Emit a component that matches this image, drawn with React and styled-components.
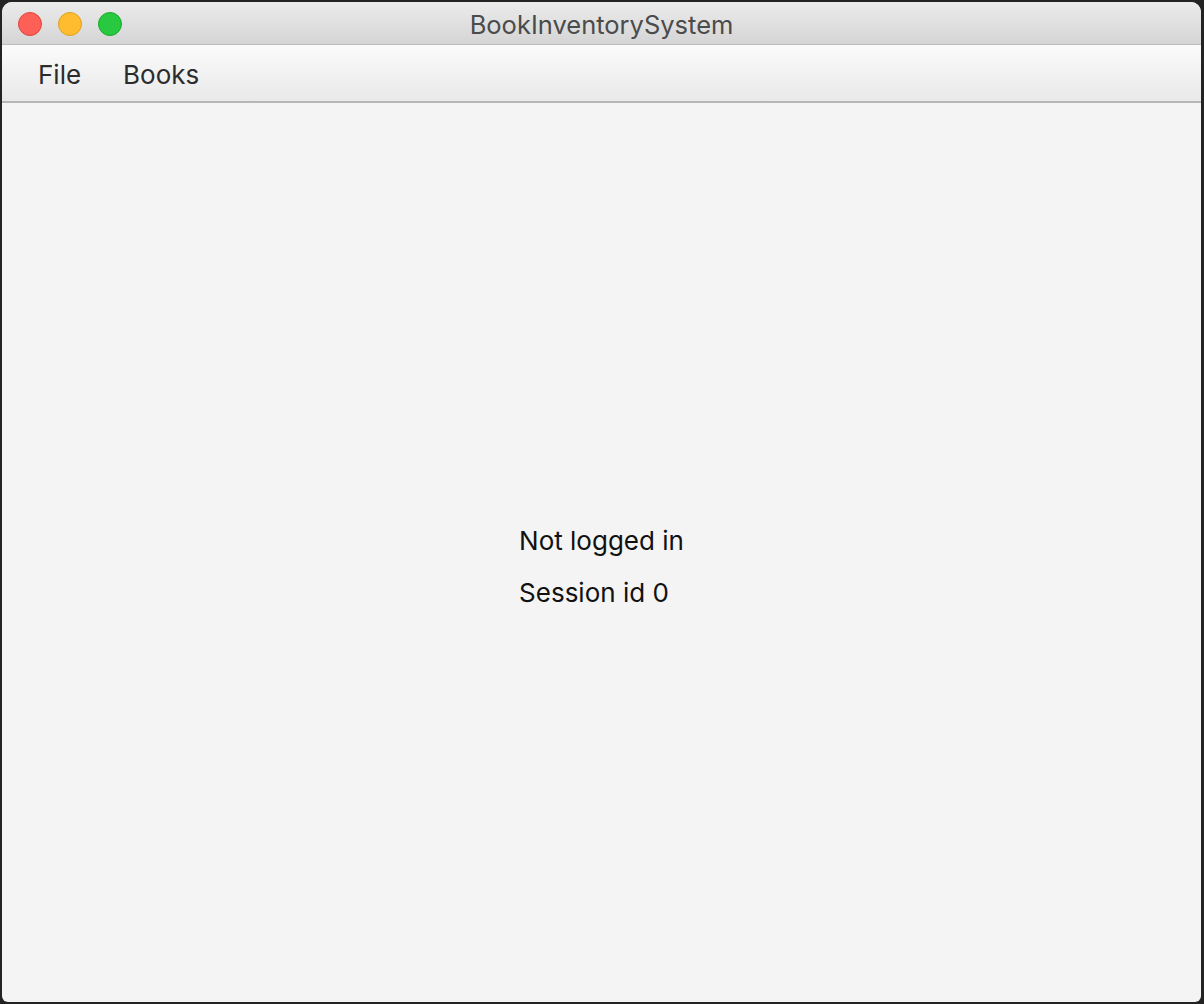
import React from "react";
import styled, { createGlobalStyle } from "styled-components";

const GlobalStyle = createGlobalStyle`
  html, body {
    margin: 0;
    padding: 0;
    background: #232323;
  }
  #root {
    height: 1004px;
  }
`;

const Desktop = styled.div`
  height: 1004px;
  box-sizing: border-box;
  padding: 2px 3px 2px 2px;
  display: flex;
`;

const Window = styled.div`
  flex: 1;
  display: flex;
  flex-direction: column;
  background: #f4f4f4;
  border-radius: 10px 10px 6px 6px;
  overflow: hidden;
  font-family: Inter, "Liberation Sans", sans-serif;
`;

const TitleBar = styled.div`
  height: 42px;
  flex-shrink: 0;
  display: grid;
  grid-template-columns: 140px 1fr 140px;
  align-items: center;
  background: linear-gradient(#ebebeb, #d5d5d5);
  border-bottom: 1px solid #bdbdbd;
`;

const Lights = styled.div`
  display: flex;
  gap: 16px;
  padding-left: 16px;
`;

const Light = styled.span`
  width: 24px;
  height: 24px;
  box-sizing: border-box;
  border-radius: 50%;
  background: ${(p) => p.fill};
  border: 1px solid ${(p) => p.edge};
`;

const Title = styled.div`
  text-align: center;
  font-size: 25.5px;
  color: #4b4b4b;
  line-height: 42px;
  padding-top: 2px;
`;

const MenuBar = styled.div`
  height: 56px;
  flex-shrink: 0;
  display: flex;
  align-items: center;
  padding-left: 15px;
  background: linear-gradient(#fbfbfb, #e9e9e9);
  border-bottom: 2px solid #b6b6b6;
`;

const MenuItem = styled.div`
  padding: 0 21px;
  font-size: 26px;
  color: #2c2c2c;
  padding-top: 3px;
`;

const Content = styled.div`
  flex: 1;
  display: flex;
  justify-content: center;
  padding-top: 422px;
`;

const Labels = styled.div`
  display: flex;
  flex-direction: column;
  gap: 20px;
`;

const Label = styled.div`
  font-size: 26px;
  line-height: 32px;
  color: #111;
`;

export default function App() {
  return (
    <>
      <GlobalStyle />
      <Desktop>
        <Window>
          <TitleBar>
            <Lights>
              <Light fill="#fe5f57" edge="#e0443e" />
              <Light fill="#febc2e" edge="#dea123" />
              <Light fill="#28c840" edge="#1aab29" />
            </Lights>
            <Title>BookInventorySystem</Title>
            <div />
          </TitleBar>
          <MenuBar>
            <MenuItem>File</MenuItem>
            <MenuItem>Books</MenuItem>
          </MenuBar>
          <Content>
            <Labels>
              <Label>Not logged in</Label>
              <Label>Session id 0</Label>
            </Labels>
          </Content>
        </Window>
      </Desktop>
    </>
  );
}
